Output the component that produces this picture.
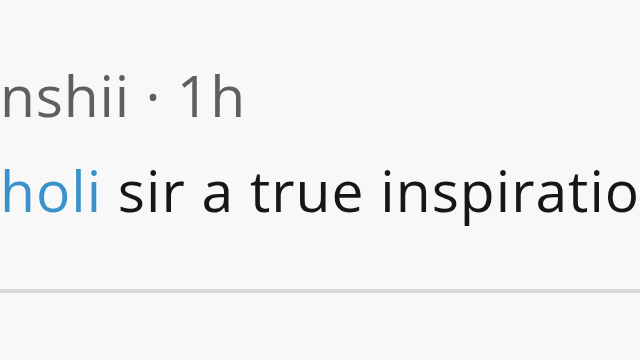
export default function App() {
  return (
    <div className="h-[360px] w-[640px] overflow-hidden bg-[#f8f8f8] font-['Open_Sans',sans-serif]">
      <div className="h-[289px] pt-[48px]">
        <div className="whitespace-nowrap text-[57px] leading-[95px] tracking-[0.8px] text-[#5f5f5f]">
          nshii · 1h
        </div>
        <div className="whitespace-nowrap text-[57px] leading-[95px] tracking-[1px] text-[#161616]">
          <span className="text-[#3a92cc]">holi</span> sir a true inspiration
        </div>
      </div>
      <div className="h-[4px] bg-[#d9d9d9]" />
    </div>
  );
}
